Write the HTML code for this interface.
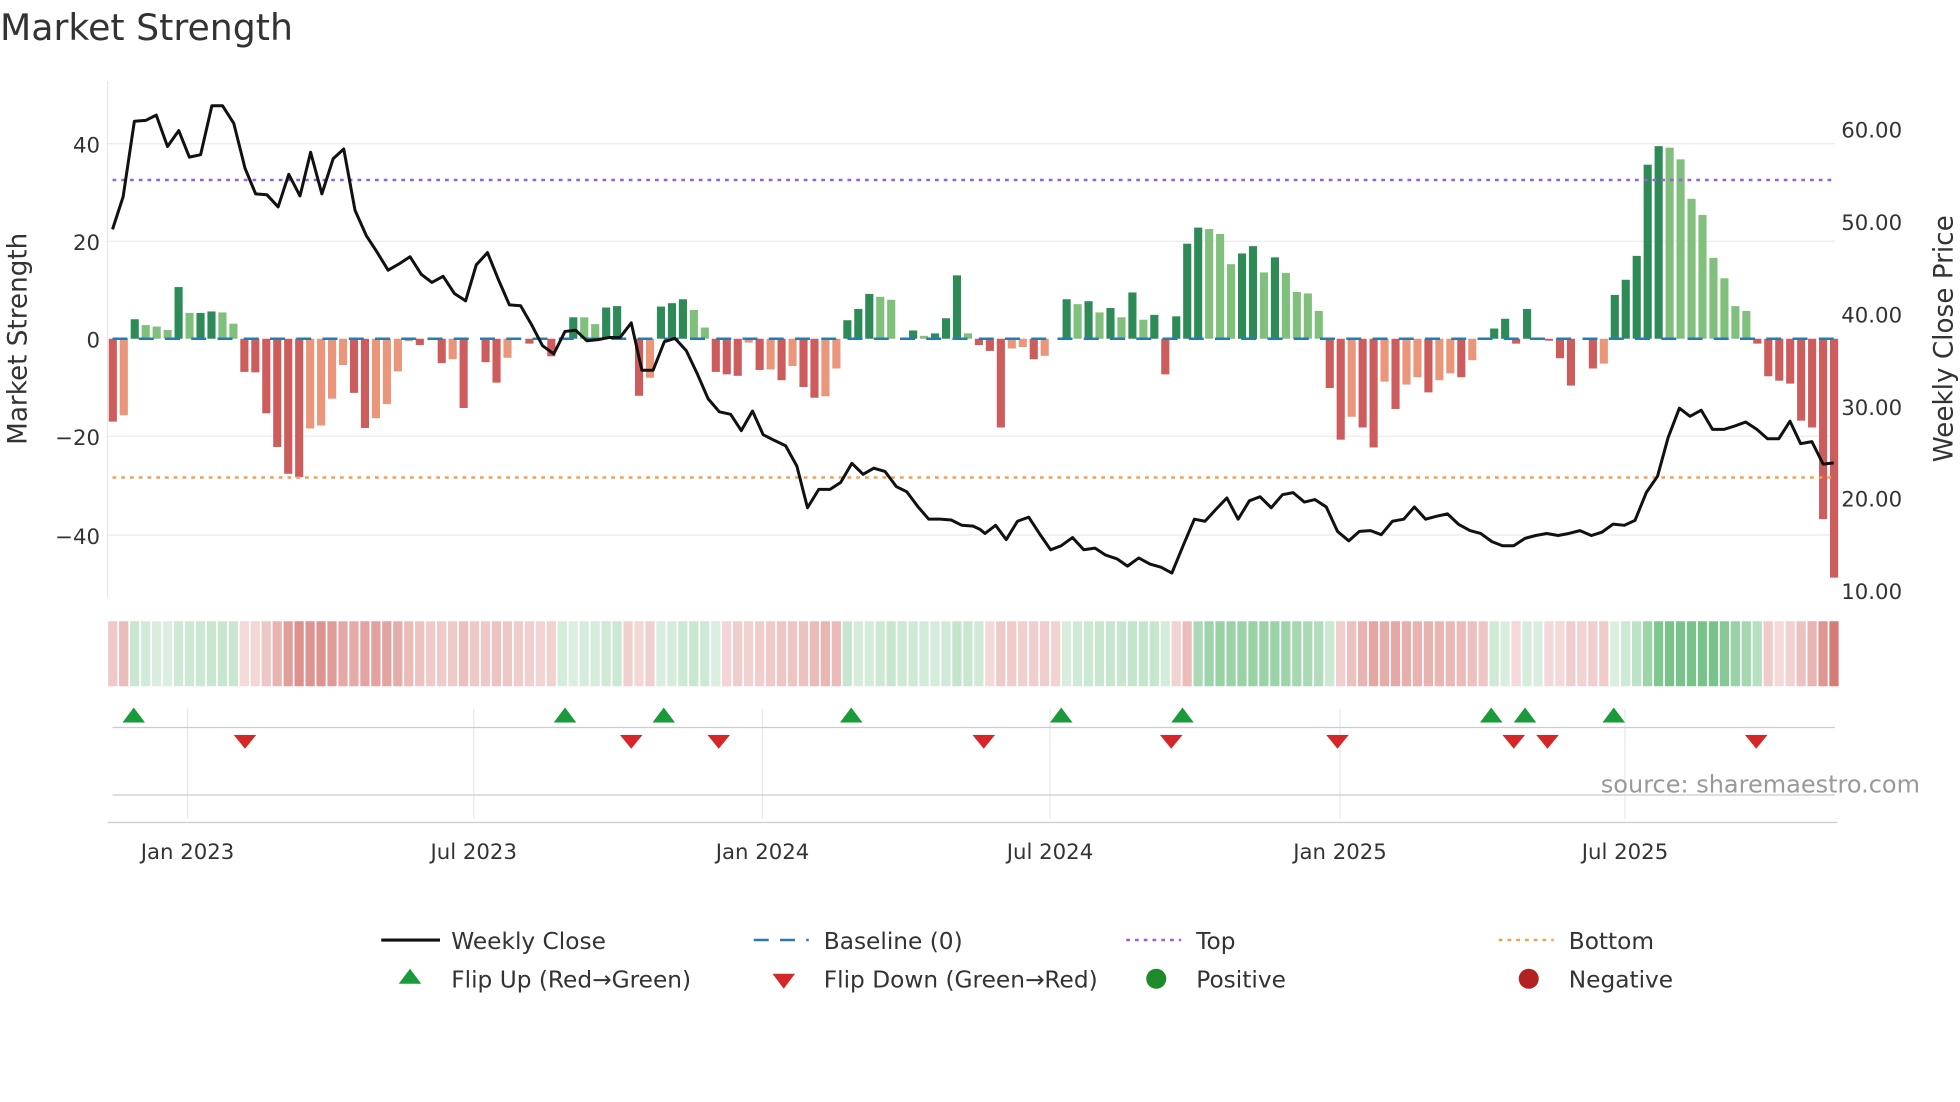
<!DOCTYPE html>
<html><head><meta charset="utf-8"><style>
html,body{margin:0;padding:0;background:#fff;width:1960px;height:1102px;overflow:hidden}
svg{display:block;font-family:"DejaVu Sans","Liberation Sans",sans-serif}
</style></head><body>
<svg id="s" width="1960" height="1102" viewBox="0 0 1568 881.6" xmlns="http://www.w3.org/2000/svg">
<text x="0" y="32" font-size="29" fill="#333">Market Strength</text>
<g stroke="#ebebeb" stroke-width="1">
<line x1="86" x2="1468" y1="115" y2="115"/><line x1="86" x2="1468" y1="193" y2="193"/>
<line x1="86" x2="1468" y1="349" y2="349"/><line x1="86" x2="1468" y1="428" y2="428"/>
</g>
<line x1="86" y1="65" x2="86" y2="478" stroke="#e6e6e6"/>
<g font-size="17" fill="#333" text-anchor="end">
<text x="80" y="122">40</text><text x="80" y="200">20</text><text x="80" y="278">0</text>
<text x="80" y="356">−20</text><text x="80" y="435">−40</text></g>
<g font-size="17" fill="#333">
<text x="1473" y="110">60.00</text><text x="1473" y="184">50.00</text><text x="1473" y="258">40.00</text>
<text x="1473" y="332">30.00</text><text x="1473" y="405">20.00</text><text x="1473" y="479">10.00</text></g>
<text transform="translate(21,271) rotate(-90)" text-anchor="middle" font-size="21" fill="#333">Market Strength</text>
<text transform="translate(1562,271) rotate(-90)" text-anchor="middle" font-size="21" fill="#333">Weekly Close Price</text>
<g id="bars"></g>
<line x1="90" x2="1468" y1="271" y2="271" stroke="#2a7ab0" stroke-width="2" stroke-dasharray="12,9"/>
<line x1="90" x2="1468" y1="144" y2="144" stroke="#9d5ce6" stroke-width="2" stroke-dasharray="3,4"/>
<line x1="90" x2="1468" y1="382" y2="382" stroke="#f0a050" stroke-width="2" stroke-dasharray="3,4"/>
<g transform="translate(0,48) scale(0.5,0.32653)"><polyline id="pl" fill="none" stroke="#111" stroke-width="3" vector-effect="non-scaling-stroke" stroke-linejoin="round"/></g>
<g id="strip"></g>
<g stroke="#e8e8e8"><line x1="150" x2="150" y1="567" y2="655"/><line x1="379" x2="379" y1="567" y2="655"/><line x1="610" x2="610" y1="567" y2="655"/><line x1="840" x2="840" y1="567" y2="655"/><line x1="1072" x2="1072" y1="567" y2="655"/><line x1="1300" x2="1300" y1="567" y2="655"/></g>
<line x1="90" x2="1468" y1="582" y2="582" stroke="#ccc"/>
<line x1="90" x2="1468" y1="636" y2="636" stroke="#ccc"/>
<line x1="86" x2="1470" y1="658" y2="658" stroke="#ccc"/>
<g id="tri"></g>
<text x="1536" y="634" text-anchor="end" font-size="19.2" fill="#999">source: sharemaestro.com</text>
<g font-size="17" fill="#333" text-anchor="middle">
<text x="150" y="687">Jan 2023</text><text x="379" y="687">Jul 2023</text><text x="610" y="687">Jan 2024</text>
<text x="840" y="687">Jul 2024</text><text x="1072" y="687">Jan 2025</text><text x="1300" y="687">Jul 2025</text></g>
<g font-size="18.6" fill="#333">
<line x1="305" x2="352" y1="752" y2="752" stroke="#111" stroke-width="2.5"/><text x="361" y="759">Weekly Close</text>
<line x1="603" x2="647" y1="752" y2="752" stroke="#2a7ab0" stroke-width="2" stroke-dasharray="12,9"/><text x="659" y="759">Baseline (0)</text>
<line x1="901" x2="945" y1="752" y2="752" stroke="#9d5ce6" stroke-width="2" stroke-dasharray="3,4"/><text x="957" y="759">Top</text>
<line x1="1199" x2="1243" y1="752" y2="752" stroke="#f0a050" stroke-width="2" stroke-dasharray="3,4"/><text x="1255" y="759">Bottom</text>
<polygon points="328,775 319,787 337,787" fill="#1a9a3a"/><text x="361" y="790">Flip Up (Red→Green)</text>
<polygon points="618,779 636,779 627,791" fill="#d62728"/><text x="659" y="790">Flip Down (Green→Red)</text>
<circle cx="925" cy="783" r="8" fill="#1f8a2a"/><text x="957" y="790">Positive</text>
<circle cx="1223" cy="783" r="8" fill="#b22222"/><text x="1255" y="790">Negative</text>
</g>
</svg>
<script>
var NS="http://www.w3.org/2000/svg";
function el(p,t,a){var e=document.createElementNS(NS,t);for(var k in a)e.setAttribute(k,a[k]);p.appendChild(e);return e;}
var D="#2e8b57",L="#80c07c",R="#cd5c5c",O="#e9967a";
var v=[[-17,R],[-15.7,O],[4,D],[2.8,L],[2.5,L],[1.8,L],[10.6,D],[5.3,L],[5.3,D],[5.6,D],[5.4,L],[3.1,L],[-6.8,R],[-6.9,R],[-15.3,R],[-22.2,R],[-27.7,R],[-28.4,R],[-18.4,O],[-17.8,O],[-12.3,O],[-5.4,O],[-11.1,R],[-18.3,R],[-16.3,O],[-13.4,O],[-6.7,O],[-0.5,O],[-1.3,R],[0,O],[-5,R],[-4.2,O],[-14.2,R],[0,O],[-4.8,R],[-9,R],[-3.9,O],[0,O],[-1,R],[0,O],[-3.6,R],[0,O],[4.4,D],[4.4,L],[3,L],[6.4,D],[6.7,D],[0,O],[-11.7,R],[-8,O],[6.6,D],[7.3,D],[8.1,D],[5.9,L],[2.3,L],[-6.8,R],[-7.3,R],[-7.6,R],[-0.8,O],[-6.4,R],[-6.3,O],[-8.5,R],[-5.6,O],[-9.9,R],[-12.1,R],[-11.8,O],[-6.1,O],[3.8,D],[6.1,D],[9.2,D],[8.6,L],[8,L],[0,O],[1.7,D],[0.6,L],[1.1,D],[4.2,D],[13,D],[1.1,L],
[-1.3,R],[-2.5,R],[-18.2,R],[-2,O],[-1.7,O],[-4.2,R],[-3.5,O],[0,O],[8.1,D],[7.1,L],[7.7,D],[5.4,L],[6.3,D],[4.4,L],[9.5,D],[3.9,L],[4.9,D],[-7.3,R],[4.6,D],[19.5,D],[22.8,D],[22.5,L],[21.5,L],[15.3,L],[17.5,D],[19,D],[13.6,L],[16.7,D],[13.5,L],[9.6,L],[9.3,L],[5.7,L],[-10.1,R],[-20.7,R],[-16,O],[-18.2,R],[-22.3,R],[-8.8,O],[-14.4,R],[-9.4,O],[-7.9,O],[-11,R],[-8.5,O],[-7.1,O],[-7.9,R],[-4.4,O],[0,O],[2.1,D],[4.1,D],[-1,R],[6.1,D],[0,O],[-0.4,R],[-4,R],[-9.6,R],[0,O],[-6.1,R],[-5.1,O],[9,D],[12.1,D],[17,D],[35.7,D],[39.5,D],[39.2,L],[36.8,L],[28.7,L],[25.4,L],[16.6,L],[12.4,L],[6.7,L],[5.7,L],[-1,R],[-7.7,R],[-8.6,R],[-9.2,R],[-16.8,R],[-18.2,R],[-37,R],[-49,R]];
var n=v.length,sp=(1467-90)/(n-1),g=document.getElementById("bars"),st=document.getElementById("strip");
var greens=[[2,11],[41,46],[50,55],[67,79],[87,96],[99,111],[126,127],[129,130],[137,150]];
function isG(i){for(var k=0;k<greens.length;k++)if(i>=greens[k][0]&&i<=greens[k][1])return true;return false;}
var ema=0;
for(var i=0;i<n;i++){var x=87+sp*i,val=v[i][0],h=Math.abs(val)*3.9;
 if(h>0.3)el(g,"rect",{x:x,y:val>0?271-h:271,width:6.5,height:h,fill:v[i][1]});
 ema=ema*0.7+val*0.3;var a=0.2+Math.min(Math.abs(ema)/25,1)*0.55;
 el(st,"rect",{x:x-0.5,y:497,width:7.4,height:52,fill:isG(i)?"#4caf63":"#c8504a","fill-opacity":a.toFixed(2)});}
var p1=[[180,415],[197,335],[215,150],[233,148],[250,135],[268,212],[286,173],[303,238],[321,232],[339,112],[356,112],[374,155],[392,265],[409,328],[427,330],[445,360],[462,280],[480,333],[497,226],[515,328],[533,242],[550,218],[568,368],[586,430],[603,470],[621,515],[638,500],[656,482],[674,525],[691,545],[709,530],[727,572],[745,590],[762,502],[780,472],[798,540],[815,600],[833,602],[851,650],[868,700],[886,720],[904,665],[921,662],[939,688],[957,685],[974,680],[992,680],[1010,644],[1027,760],[1045,760],[1063,690],[1080,682],[1098,712],[1116,770],[1133,830],[1151,862],[1169,868],[1186,908],[1204,860],[1221,918],[1239,932],[1257,945],[1275,995],[1292,1097],[1310,1052],[1328,1052],[1345,1035],[1363,988],[1381,1015],[1398,1000],[1416,1008],[1434,1045],[1451,1058],[1469,1095],[1486,1125],[1504,1125],[1522,1127],[1539,1140],[1557,1142]];
var p2=[[0,1150],[8,1160],[25,1140],[42,1175],[60,1130],[78,1120],[95,1160],[113,1200],[130,1190],[148,1170],[166,1200],[184,1196],[201,1213],[219,1222],[236,1240],[254,1220],[272,1235],[290,1243],[307,1257],[325,1190],[343,1125],[360,1130],[378,1100],[395,1073],[413,1125],[431,1080],[448,1070],[466,1097],[484,1065],[501,1060],[519,1083],[536,1077],[554,1095],[572,1155],[590,1178],[607,1155],[625,1153],[642,1163],[660,1130],[678,1125],[695,1095],[713,1125],[730,1118],[748,1112],[766,1138],[784,1153],[801,1160],[819,1180],[836,1190],[854,1190],[872,1172],[889,1165],[907,1160],[925,1165],[942,1160],[960,1153],[978,1165],[995,1157],[1013,1137],[1031,1140],[1048,1128],[1066,1060],[1084,1020],[1101,925],[1119,853],[1136,873],[1154,858],[1172,905],[1190,905],[1207,897],[1225,887],[1243,905],[1260,928],[1278,928],[1296,885],[1313,940],[1331,935],[1349,990],[1366,987]];
var pts=p1.map(function(p){return p[0]+","+p[1]}).concat(p2.map(function(p){return (p[0]+1568)+","+p[1]}));
document.getElementById("pl").setAttribute("points",pts.join(" "));
var tg=document.getElementById("tri");
[107,452,531,681,849,946,1193,1220,1291].forEach(function(x){el(tg,"polygon",{points:x+",566 "+(x-9)+",578 "+(x+9)+",578",fill:"#1a9a3a"});});
[196,505,575,787,937,1070,1211,1238,1405].forEach(function(x){el(tg,"polygon",{points:(x-9)+",588 "+(x+9)+",588 "+x+",599",fill:"#d62728"});});
</script>
</body></html>
